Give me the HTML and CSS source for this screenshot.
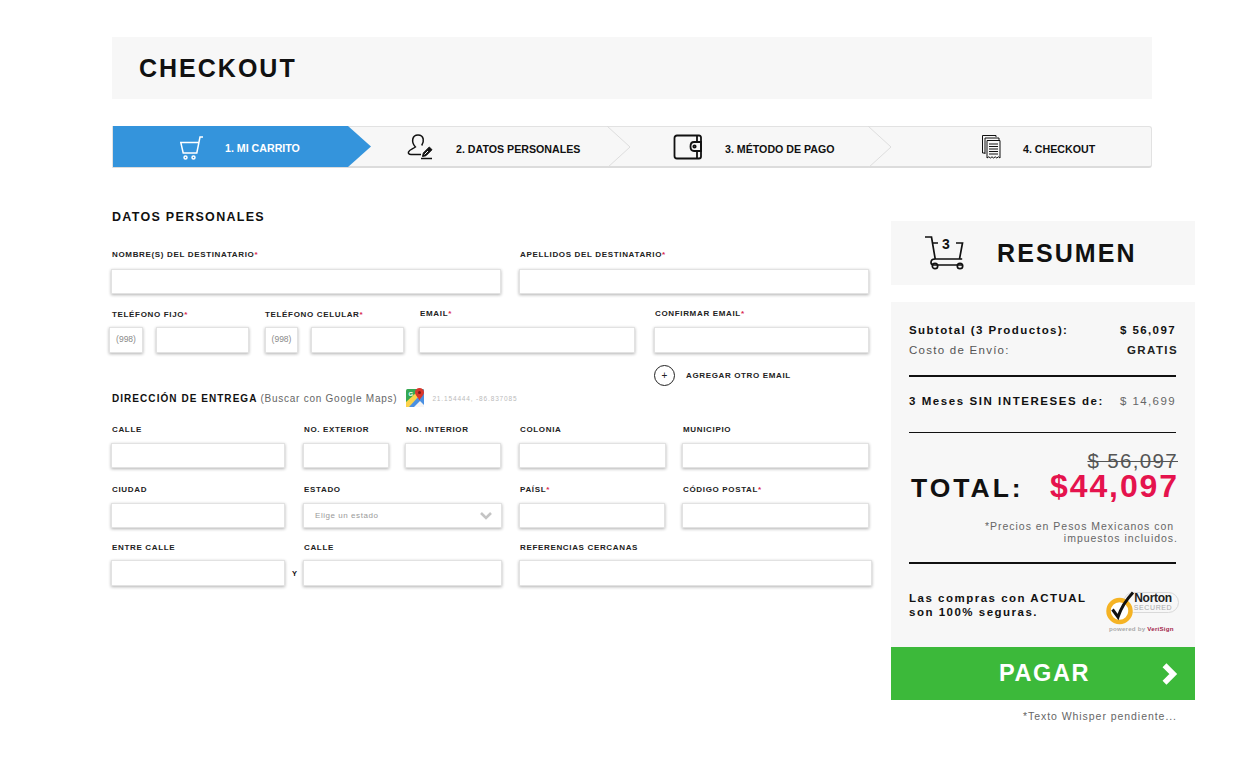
FILE: index.html
```html
<!DOCTYPE html>
<html lang="es">
<head>
<meta charset="utf-8">
<title>Checkout</title>
<link rel="stylesheet" href="styles.css">
</head>
<body>
<div class="page">
  <header class="title-bar"><h1>CHECKOUT</h1></header>

  <nav class="stepper">
    <div class="step step-active">
      <svg class="step-icon cart-icon" viewBox="0 0 26 26" width="26" height="26" fill="none" stroke="#fff" stroke-width="1.5"><path d="M25 2h-3l-3.200 16H5.200L2.800 7.500h17.600"/><circle cx="7.500" cy="22.500" r="1.500"/><circle cx="15.500" cy="22.500" r="1.500"/></svg>
      <span>1. MI CARRITO</span>
    </div>
    <div class="step step-2">
      <svg class="step-icon" viewBox="0 0 26 26" width="26" height="26" fill="none" stroke="#111" stroke-width="1.500"><path d="M14 20.500H4c-2 0-3-1-2.500-2.500.8-2.400 4.300-3.200 6.900-5-2.200-2.300-3.200-5-2.600-8C6.400 2.300 8.500 1 11 1s4.700 1.500 5.200 4c.5 2.500-.2 4.600-1.500 6.500"/><path d="M15.500 22.500l.8-3.500 6-6 2.700 2.700-6 6z" fill="#111" stroke-width="1"/><path d="M17.500 20.500l3.500-3.500" stroke="#f7f7f7" stroke-width="1"/><path d="M14 24.500h11"/></svg>
      <span>2. DATOS PERSONALES</span>
      <svg class="chevron" viewBox="0 0 24 42" width="24" height="42" fill="none" stroke="#ddd"><path d="M0 0l23 21L0 42"/></svg>
    </div>
    <div class="step step-3">
      <svg class="step-icon" viewBox="0 0 30 26" width="30" height="26" fill="none" stroke="#111" stroke-width="1.800"><path d="M28 7V3.500C28 2 27 1.500 26 1.500H4C2.500 1.500 1.500 2.500 1.500 4v18C1.500 23.500 2.500 24.500 4 24.500h22c1 0 2-.5 2-2V18"/><path d="M28 8h-7c-2.500 0-3.500 1.800-3.500 4.500S18.500 17 21 17h7z"/><path d="M24 1.500V8M24 17v7.500M28 7v11"/><circle cx="21.500" cy="12.500" r="1.200"/></svg>
      <span>3. MÉTODO DE PAGO</span>
      <svg class="chevron" viewBox="0 0 24 42" width="24" height="42" fill="none" stroke="#ddd"><path d="M0 0l23 21L0 42"/></svg>
    </div>
    <div class="step step-4">
      <svg class="step-icon" viewBox="0 0 20 26" width="20" height="26" fill="none" stroke="#111"><path d="M15 3V1.500H1.500V19H4"/><path d="M18 6V4H4v16"/><path d="M6 6.500h13v17.500l-1.600-1.200-1.600 1.200-1.600-1.200-1.600 1.200-1.600-1.200-1.600 1.200-1.600-1.200L6 24z" fill="#f7f7f7"/><path d="M8 10h9M8 12.500h9M8 15h9M8 17.500h9M8 20h9" stroke-width="1.100"/></svg>
      <span>4. CHECKOUT</span>
    </div>
  </nav>

  <main class="content">
    <form class="form">
      <h2 class="section-title">DATOS PERSONALES</h2>

      <div class="row row-names">
        <div class="field w-390"><label>NOMBRE(S) DEL DESTINATARIO<b>*</b></label><div class="input"></div></div>
        <div class="field w-350 gap-18"><label>APELLIDOS DEL DESTINATARIO<b>*</b></label><div class="input"></div></div>
      </div>

      <div class="row row-contact">
        <div class="field phone">
          <label>TELÉFONO FIJO<b>*</b></label>
          <div class="phone-inputs"><div class="input prefix">(998)</div><div class="input"></div></div>
        </div>
        <div class="field phone phone-2">
          <label>TELÉFONO CELULAR<b>*</b></label>
          <div class="phone-inputs"><div class="input prefix">(998)</div><div class="input"></div></div>
        </div>
        <div class="field w-216 email"><label>EMAIL<b>*</b></label><div class="input"></div></div>
        <div class="field w-215 confirm"><label>CONFIRMAR EMAIL<b>*</b></label><div class="input"></div>
          <div class="add-email"><span class="plus">+</span><span>AGREGAR OTRO EMAIL</span></div>
        </div>
      </div>

      <div class="address-title">
        <strong>DIRECCIÓN DE ENTREGA</strong> <span class="map-hint">(Buscar con Google Maps)</span>
        <svg class="maps-icon" viewBox="0 0 20 20" width="20" height="20"><rect x="1" y="1" width="18" height="18" rx="1.500" fill="#35a853"/><path d="M1 19L19 1v18z" fill="#4a90e2"/><path d="M1 14L11 5l3 3L4 19H1z" fill="#fbd24a"/><path d="M9 19l6-6 4 4v2z" fill="#f5f5f5"/><text x="3.500" y="8" class="maps-g">G</text><path d="M14.500 0c2.500 0 4.500 1.800 4.500 4.300 0 2.700-3 5-4.500 8.200C13 9.300 10 7 10 4.300 10 1.800 12 0 14.500 0z" fill="#d9372c"/><circle cx="14.500" cy="4.500" r="1.500" fill="#7b1c17"/></svg>
        <span class="coords">21.154444, -86.837085</span>
      </div>

      <div class="row row-street">
        <div class="field w-174"><label>CALLE</label><div class="input"></div></div>
        <div class="field w-86 gap-18"><label>NO. EXTERIOR</label><div class="input"></div></div>
        <div class="field w-96 gap-16"><label>NO. INTERIOR</label><div class="input"></div></div>
        <div class="field w-147 gap-18"><label>COLONIA</label><div class="input"></div></div>
        <div class="field w-187 gap-16"><label>MUNICIPIO</label><div class="input"></div></div>
      </div>

      <div class="row row-city">
        <div class="field w-174"><label>CIUDAD</label><div class="input"></div></div>
        <div class="field w-199 gap-18"><label>ESTADO</label>
          <div class="input select"><span>Elige un estado</span>
            <svg viewBox="0 0 12 8" width="12" height="8" fill="none" stroke="#c4c4c4" stroke-width="2.600"><path d="M1 1l5 5 5-5"/></svg>
          </div>
        </div>
        <div class="field w-146 gap-17"><label>PAÍSL<b>*</b></label><div class="input"></div></div>
        <div class="field w-187 gap-17"><label>CÓDIGO POSTAL<b>*</b></label><div class="input"></div></div>
      </div>

      <div class="row row-refs">
        <div class="field w-174"><label>ENTRE CALLE</label><div class="input tall"></div></div>
        <div class="y-sep">Y</div>
        <div class="field w-199"><label>CALLE</label><div class="input tall"></div></div>
        <div class="field w-353 gap-17"><label>REFERENCIAS CERCANAS</label><div class="input tall"></div></div>
      </div>
    </form>

    <aside class="summary">
      <div class="summary-head">
        <div class="head-cart">
          <svg viewBox="0 0 42 34" width="42" height="34" fill="none" stroke="#111" stroke-width="1.700"><path d="M1 1h6.500l3.700 22h27"/><path d="M8 7h6M32 7h6.500l-3 16"/><path d="M11 23c-2.500 0-4 1.400-4 3.500 0 1.500 1 2 2 2M38 29H9"/><circle cx="11" cy="30" r="2.700"/><circle cx="36" cy="30" r="2.700"/></svg>
          <span>3</span>
        </div>
        <h2>RESUMEN</h2>
      </div>

      <div class="summary-body">
        <div class="line line-strong"><span>Subtotal (3 Productos):</span><span>$ 56,097</span></div>
        <div class="line line-ship"><span>Costo de Envío:</span><strong>GRATIS</strong></div>
        <hr>
        <div class="line line-months"><strong>3 Meses SIN INTERESES de:</strong><span>$ 14,699</span></div>
        <hr class="hr-months">
        <div class="old-price">$ 56,097</div>
        <div class="total"><span>TOTAL:</span><span class="total-price">$44,097</span></div>
        <p class="tax-note">*Precios en Pesos Mexicanos con&nbsp;<br>impuestos incluidos.</p>
        <hr class="hr-tax">
        <div class="secure">
          <p>Las compras con ACTUAL<br>son 100% seguras.</p>
          <div class="norton">
            <div class="norton-badge">
              <svg class="norton-check" viewBox="0 0 34 36" width="34" height="36"><circle cx="14.500" cy="20" r="11" fill="#fff" stroke="#f5b324" stroke-width="4.500"/><path d="M7.500 18.500l5.500 7.500C16 17 21 9 28 1.500" fill="none" stroke="#111" stroke-width="3"/></svg>
              <div class="norton-pill"><strong>Norton</strong><span>SECURED</span></div>
            </div>
            <div class="norton-by">powered by <b>VeriSign</b></div>
          </div>
        </div>
      </div>

      <button class="pay" type="button"><span>PAGAR</span>
        <svg viewBox="0 0 16 20" width="18" height="22" fill="none" stroke="#fff" stroke-width="5"><path d="M3 2l8 8-8 8"/></svg>
      </button>
      <p class="whisper">*Texto Whisper pendiente...</p>
    </aside>
  </main>
</div>
</body>
</html>
```

FILE: styles.css
```css
* { box-sizing: border-box; }
html, body { margin: 0; padding: 0; background: #fff; }
body { font-family: "Liberation Sans", Arial, sans-serif; color: #111; }
.page { width: 1242px; height: 767px; padding-top: 37px; overflow: hidden; }

.title-bar { margin-left: 112px; width: 1040px; height: 62px; background: #f7f7f7; display: flex; align-items: center; padding: 1px 0 0 27px; }
.title-bar h1 { margin: 0; font-size: 25px; font-weight: 700; letter-spacing: 2px; color: #111; }

.stepper { margin: 27px 0 0 112px; width: 1040px; height: 42px; background: #f7f7f7; border: 1px solid #e2e2e2; border-bottom: 2px solid #dcdcdc; border-radius: 0 3px 3px 0; display: flex; }
.step { position: relative; height: 40px; display: flex; align-items: center; padding-top: 3px; font-size: 10.650px; font-weight: 700; white-space: nowrap; }
.step-active { width: 258px; height: 41px; margin-top: -1px; background: #3494dc; color: #fff; clip-path: polygon(0 0, 235px 0, 258px 50%, 235px 100%, 0 100%); padding-left: 65px; }
.step-2 { width: 260px; padding-left: 36px; }
.step-3 { width: 260px; padding-left: 42px; }
.step-4 { flex: 1; padding-left: 90px; }
.step-icon { flex: none; margin-top: -3px; }
.cart-icon { margin-right: 21px; margin-top: -1px; }
.step-2 .step-icon { margin-right: 23px; }
.step-3 .step-icon { margin-right: 22px; }
.step-4 .step-icon { margin-right: 22px; }
.chevron { position: absolute; top: -1px; }
.step-2 .chevron { right: 0; }
.step-3 .chevron { right: -1px; }

.content { display: flex; }
.form { width: 780px; margin-left: 111px; padding-top: 42px; }
.section-title { margin: 0 0 0 1px; font-size: 12.500px; line-height: 15px; font-weight: 700; letter-spacing: 1.300px; color: #111; }

.row { display: flex; align-items: flex-start; }
.field { flex: none; }
.field label { display: block; height: 10px; margin-left: 1px; font-size: 8px; line-height: 10px; font-weight: 700; letter-spacing: .66px; color: #222; white-space: nowrap; }
.field label b { color: #d8284f; }
.input { height: 25px; margin-top: 8px; background: #fff; border: 1px solid #e2e2e2; box-shadow: 0 1px 3px rgba(0, 0, 0, .3); }
.input.tall { height: 26px; margin-top: 7px; }
.row-names .input { margin-top: 9px; }

.w-390 { width: 390px; }
.w-350 { width: 350px; }
.w-216 { width: 216px; }
.w-215 { width: 215px; }
.w-174 { width: 174px; }
.w-86 { width: 86px; }
.w-96 { width: 96px; }
.w-147 { width: 147px; }
.w-146 { width: 146px; }
.w-187 { width: 187px; }
.w-199 { width: 199px; }
.w-353 { width: 353px; }
.gap-16 { margin-left: 16px; }
.gap-17 { margin-left: 17px; }
.gap-18 { margin-left: 18px; }

.row-names { margin-top: 25px; }
.row-contact { margin-top: 16px; }
.row-street { margin-top: 17px; }
.row-city { margin-top: 17px; }
.row-refs { margin-top: 15px; }

.phone { width: 140px; margin-left: -2px; }
.phone label { margin-left: 3px; }
.phone-2 { width: 139px; margin-left: 16px; }
.phone-2 label { margin-left: 0; }
.phone-inputs { display: flex; gap: 13px; margin-top: 3px; }
.phone .input { width: 93px; height: 26px; margin-top: 4px; }
.phone .input.prefix { width: 34px; font-size: 8.500px; line-height: 23px; text-align: center; color: #8a8a8a; }
.phone-2 .input.prefix { width: 33px; }
.email { margin-left: 15px; }
.confirm { margin-left: 19px; }
.email label, .confirm label { margin-top: -1px; }
.email .input, .confirm .input { height: 26px; margin-top: 8px; }

.add-email { display: flex; align-items: center; gap: 11px; margin-top: 12px; font-size: 8px; font-weight: 700; letter-spacing: .64px; color: #222; white-space: nowrap; }
.plus { width: 21px; height: 21px; flex: none; border: 1px solid #222; border-radius: 50%; display: flex; align-items: center; justify-content: center; font-size: 10px; font-weight: 400; letter-spacing: 0; }

.address-title { display: flex; align-items: center; margin: 2px 0 0 1px; height: 20px; font-size: 10px; white-space: pre; }
.address-title strong { font-weight: 700; letter-spacing: 1.050px; }
.map-hint { margin-left: 3px; color: #666; letter-spacing: .75px; }
.maps-icon { margin-left: 8px; flex: none; }
.maps-g { font-size: 6px; font-weight: 700; fill: #fff; }
.coords { margin-left: 7px; font-size: 6.500px; color: #bbb; letter-spacing: .85px; }

.select { display: flex; align-items: center; justify-content: space-between; padding: 0 9px 0 11px; font-size: 8px; letter-spacing: .55px; color: #999; }
.y-sep { width: 18px; margin-top: 26px; padding-left: 7px; font-size: 7.500px; font-weight: 700; }

.summary { width: 304px; flex: none; margin-top: 53px; }
.summary-head { height: 64px; background: #f7f7f7; display: flex; align-items: center; padding-left: 33px; }
.summary-head h2 { margin: 0 0 0 31px; font-size: 25px; font-weight: 700; letter-spacing: 2.100px; }
.head-cart { position: relative; width: 42px; height: 34px; flex: none; }
.head-cart svg { display: block; }
.head-cart span { position: absolute; left: 18px; top: 0; font-size: 14px; line-height: 16px; font-weight: 700; }

.summary-body { margin-top: 17px; height: 345px; background: #f7f7f7; padding: 21px 19px 0 18px; }
.line { display: flex; justify-content: space-between; font-size: 11.500px; letter-spacing: 1.400px; white-space: nowrap; }
.line-strong { font-weight: 700; line-height: 14px; color: #111; }
.line-ship { margin-top: 6px; line-height: 14px; color: #555; letter-spacing: 1.260px; }
.line-ship strong { color: #222; margin-right: -2px; letter-spacing: 1.400px; }
.line-months { margin-top: 17px; line-height: 14px; }
.line-months strong { color: #111; letter-spacing: 1.560px; }
.line-months span { color: #666; }
hr { height: 1.500px; margin: 18px 0 0; border: 0; background: #111; }
.hr-months { margin-top: 24px; }
.old-price { margin: 17px -2px 0 0; text-align: right; font-size: 20.500px; line-height: 22px; letter-spacing: 1.350px; color: #555; text-decoration: line-through; text-decoration-thickness: 1px; }
.total { display: flex; justify-content: space-between; align-items: baseline; margin: -3px -3px 0 2px; line-height: 34px; font-weight: 700; white-space: nowrap; }
.total span:first-child { font-size: 26.500px; letter-spacing: 3px; color: #111; }
.total-price { font-size: 32px; letter-spacing: 1.900px; color: #e5134d; }
.tax-note { margin: 15px -2px 0 0; text-align: right; font-size: 10.500px; line-height: 12px; letter-spacing: .98px; color: #666; }
.hr-tax { margin-top: 18px; }

.secure { display: flex; justify-content: space-between; margin-top: 22px; }
.secure p { margin: 5px 0 0; font-size: 11.500px; line-height: 14px; font-weight: 700; letter-spacing: 1.500px; color: #111; white-space: nowrap; }
.norton { width: 75px; flex: none; margin: -1px -4px 0 0; }
.norton-badge { position: relative; height: 32px; }
.norton-check { position: absolute; left: 0; top: -1px; z-index: 1; }
.norton-pill { margin: 7px 0 0 18px; width: 56px; height: 21px; border: 1px solid #d9d9d9; border-radius: 11px; display: flex; flex-direction: column; align-items: center; justify-content: center; padding-left: 4px; }
.norton-pill strong { font-size: 12px; line-height: 11px; letter-spacing: -.3px; color: #222; }
.norton-pill span { font-size: 7px; line-height: 8px; letter-spacing: .6px; color: #aaa; }
.norton-by { margin: 1px 0 0 4px; font-size: 6.200px; color: #aaa; white-space: nowrap; letter-spacing: .2px; font-weight: 700; }
.norton-by b { color: #a31f4c; }

.pay { display: flex; width: 100%; height: 53px; align-items: center; padding: 0 16px 0 108px; justify-content: space-between; border: 0; background: #3cb93a; color: #fff; font: 700 23.500px "Liberation Sans", Arial, sans-serif; letter-spacing: 1.600px; }
.whisper { margin: 10px 18px 0 0; text-align: right; font-size: 10.500px; line-height: 12px; letter-spacing: .95px; color: #666; }
```
